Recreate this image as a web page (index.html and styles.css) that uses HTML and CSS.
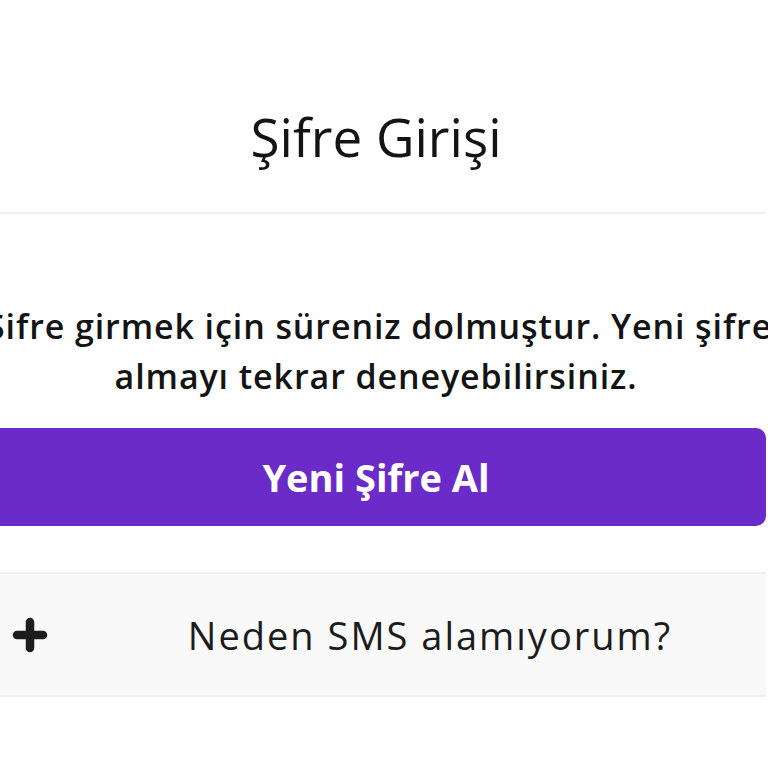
FILE: index.html
```html
<!DOCTYPE html>
<html lang="tr">
<head>
  <meta charset="UTF-8">
  <meta name="viewport" content="width=device-width, initial-scale=1.0">
  <title>Şifre Girişi</title>
  <link rel="stylesheet" href="styles.css">
</head>
<body>
  <div class="page">
    <div class="header">
      <h1 class="title">Şifre Girişi</h1>
    </div>

    <div class="content">
      <p class="message">Şifre girmek için süreniz dolmuştur. Yeni şifre<br>almayı tekrar deneyebilirsiniz.</p>
      <button class="btn btn-primary">Yeni Şifre Al</button>
    </div>

    <div class="faq">
      <div class="faq-item">
        <span class="faq-icon">
          <svg width="36" height="36" viewBox="0 0 36 36">
            <path d="M18 5 V31 M5 18 H31" stroke="#1d1d1d" stroke-width="8.5" stroke-linecap="round" fill="none"/>
          </svg>
        </span>
        <span class="faq-title">Neden SMS alamıyorum?</span>
      </div>
    </div>
  </div>
</body>
</html>
```

FILE: styles.css
```css
body {
  margin: 0;
  padding: 0;
  overflow: hidden;
  background: #fff;
  font-family: 'Open Sans', 'Noto Sans', sans-serif;
  color: #141414;
}

.page {
  width: 780px;
  margin-left: -14px;
}

.header {
  padding: 104px 0 42px;
  border-bottom: 2px solid #f1f1f1;
  text-align: center;
}

.title {
  margin: 0;
  font-size: 53px;
  font-weight: 400;
  line-height: 66px;
}

.content {
  padding: 87px 0 46px;
  text-align: center;
}

.message {
  margin: 0 0 27px;
  font-size: 34px;
  font-weight: 600;
  line-height: 50px;
  letter-spacing: 0.9px;
  white-space: nowrap;
}

.btn {
  display: block;
  width: 780px;
  height: 98px;
  border: none;
  border-radius: 10px;
  font-family: inherit;
  font-size: 38px;
  font-weight: 700;
  cursor: pointer;
}

.btn-primary {
  background: #6a2bc8;
  color: #fff;
}

.faq {
  border-top: 2px solid #efefef;
  border-bottom: 2px solid #efefef;
  background: #f9f9f9;
}

.faq-item {
  display: flex;
  align-items: center;
  height: 121px;
  padding-left: 26px;
}

.faq-icon {
  display: flex;
  width: 36px;
}

.faq-title {
  flex: 1;
  padding-left: 46px;
  text-align: center;
  font-size: 38px;
  letter-spacing: 2px;
  color: #1c1c1c;
}
```
